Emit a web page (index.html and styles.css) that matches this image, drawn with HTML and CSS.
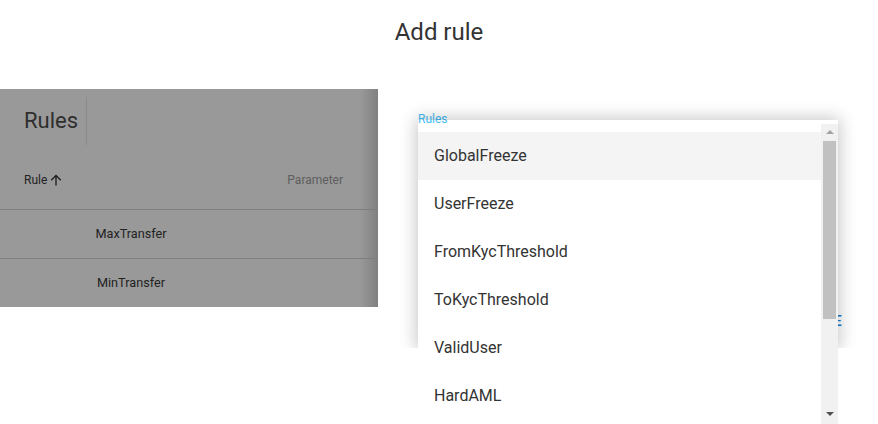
FILE: index.html
```html
<!DOCTYPE html>
<html>
<head>
<meta charset="utf-8">
<link rel="stylesheet" href="styles.css">
</head>
<body>
<header class="title">Add rule</header>
<main class="stage">
  <section class="table-panel">
    <div class="panel-head"><h2 class="panel-title">Rules</h2></div>
    <div class="thead">
      <div class="th th-rule">Rule<svg class="arrow" width="12" height="12" viewBox="0 0 12 12"><path d="M6 11.5V1.5M1.2 6.3L6 1.5l4.8 4.8" fill="none" stroke="#222" stroke-width="1.4"/></svg></div>
      <div class="th th-param">Parameter</div>
    </div>
    <div class="row"><div class="cell">MaxTransfer</div></div>
    <div class="row"><div class="cell">MinTransfer</div></div>
  </section>
  <section class="dialog">
    <label class="field-label">Rules</label>
    <div class="actions"><span class="btn">SAVE</span></div>
    <div class="menu">
      <ul class="list">
        <li class="item active">GlobalFreeze</li>
        <li class="item">UserFreeze</li>
        <li class="item">FromKycThreshold</li>
        <li class="item">ToKycThreshold</li>
        <li class="item">ValidUser</li>
        <li class="item">HardAML</li>
      </ul>
      <div class="scrollbar">
        <span class="arr up"></span>
        <span class="thumb"></span>
        <span class="arr down"></span>
      </div>
    </div>
  </section>
</main>
</body>
</html>
```
FILE: styles.css
```css
* { box-sizing: border-box; }
html, body { margin: 0; padding: 0; }
body {
  width: 878px;
  height: 424px;
  overflow: hidden;
  background: #fff;
  font-family: Roboto, "Liberation Sans", sans-serif;
  color: #333;
}
.title {
  height: 89px;
  padding-top: 18px;
  text-align: center;
  font-size: 24px;
  line-height: 28px;
  color: #333;
}
.stage {
  display: flex;
  height: 259px;
}
.table-panel {
  width: 378px;
  height: 218px;
  flex: none;
  background: linear-gradient(to right, rgba(0,0,0,0) 360px, rgba(0,0,0,0.16) 378px), #999;
}
.panel-head {
  height: 56px;
  padding: 8px 0 0 24px;
  display: flex;
}
.panel-title {
  margin: 0;
  height: 48px;
  padding-right: 8px;
  border-right: 1px solid #8a8a8a;
  font-size: 22px;
  font-weight: 400;
  line-height: 48px;
  color: #2e2e2e;
}
.thead {
  height: 64px;
  padding: 6px 35px 0 24px;
  display: flex;
  align-items: center;
  justify-content: space-between;
  font-size: 12px;
}
.th-rule { color: #222; display: flex; align-items: center; gap: 3px; }
.arrow { display: block; margin-top: -1px; }
.th-param { color: #5e5e5e; }
.row {
  height: 49px;
  border-top: 1px solid #7e7e7e;
  display: flex;
  align-items: center;
  padding: 0 0 2px 24px;
  font-size: 12.7px;
  color: #222;
}
.cell { width: 214px; text-align: center; }
.dialog {
  flex: 1;
  position: relative;
  display: flex;
  flex-direction: column;
  padding: 23px 36px 9px 40px;
}
.field-label {
  font-size: 12px;
  line-height: 14px;
  color: #40bdf5;
}
.actions {
  margin-top: auto;
  display: flex;
  justify-content: flex-end;
}
.btn {
  font-size: 14px;
  font-weight: 500;
  line-height: 36px;
  color: #1976d2;
  letter-spacing: 0.4px;
}
.menu {
  position: absolute;
  top: 35px;
  left: 40px;
  width: 420px;
  height: 300px;
  background: #fff;
  display: flex;
  z-index: 2;
}
.menu::before {
  content: "";
  position: absolute;
  left: 0;
  right: 0;
  top: -4px;
  height: 228px;
  box-shadow: 0 0 16px 2px rgba(0,0,0,0.22);
  clip-path: inset(-40px -40px 0 -40px);
  z-index: -1;
}
.list {
  list-style: none;
  margin: 0;
  padding: 8px 0 0 0;
  flex: 1;
  background: #fff;
}
.item {
  height: 48px;
  line-height: 48px;
  padding-left: 16px;
  font-size: 16px;
  color: #333;
}
.item.active { background: #f4f4f4; }
.scrollbar {
  width: 17px;
  background: #f1f1f1;
  display: flex;
  flex-direction: column;
  align-items: center;
  position: relative;
}
.arr {
  width: 0;
  height: 0;
  border-left: 4px solid transparent;
  border-right: 4px solid transparent;
}
.arr.up {
  margin-top: 6px;
  border-bottom: 4px solid #a3a3a3;
}
.thumb {
  margin-top: 7px;
  width: 13px;
  height: 178px;
  background: #c1c1c1;
}
.arr.down {
  margin-top: auto;
  margin-bottom: 8px;
  border-top: 4px solid #505050;
}
```
